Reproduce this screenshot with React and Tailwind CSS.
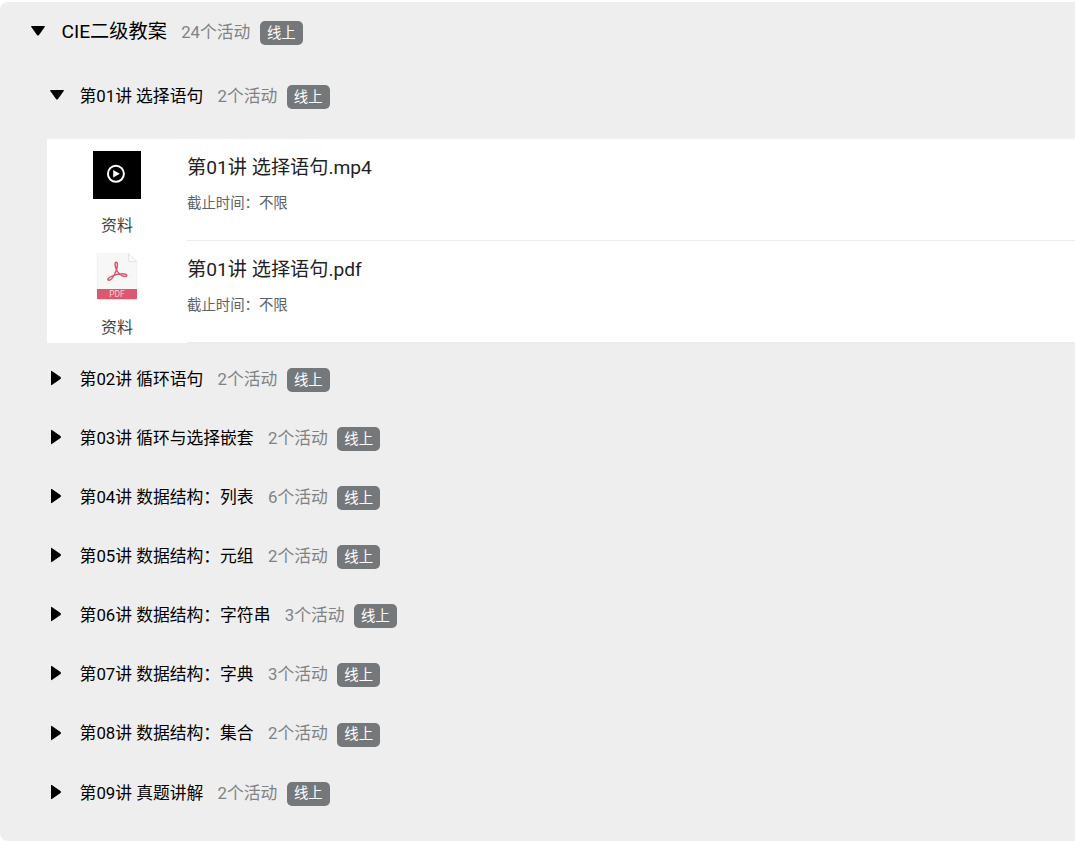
import React from "react";

const lessons = [
  { title: "第02讲 循环语句", count: 2 },
  { title: "第03讲 循环与选择嵌套", count: 2 },
  { title: "第04讲 数据结构：列表", count: 6 },
  { title: "第05讲 数据结构：元组", count: 2 },
  { title: "第06讲 数据结构：字符串", count: 3 },
  { title: "第07讲 数据结构：字典", count: 3 },
  { title: "第08讲 数据结构：集合", count: 2 },
  { title: "第09讲 真题讲解", count: 2 },
];

const Caret = ({ open }) =>
  open ? (
    <svg className="w-4 h-3 mb-[2px] shrink-0" viewBox="0 0 16 12">
      <path d="M1.8 1h12.4q1.3 0 .5 1.1L9 9.9q-1 1.2-2 0L1.3 2.1Q.5 1 1.8 1Z" />
    </svg>
  ) : (
    <svg className="w-3 h-4 mb-px shrink-0" viewBox="0 0 12 16">
      <path d="M1 1.8Q1 .3 2.2 1.2l8.3 5.7q1.2 1.1 0 2.2l-8.3 5.7Q1 15.7 1 14.2Z" />
    </svg>
  );

const Meta = ({ count }) => (
  <>
    <span className="ml-[14.3px] pt-[2px] text-[16.8px] text-[#808385]">{count}个活动</span>
    <span className="ml-[9.4px] mt-[3px] flex h-6 w-[43px] items-center justify-center rounded-[5px] bg-[#75787b] pt-px text-[14.4px] text-white">
      线上
    </span>
  </>
);

const VideoIcon = () => (
  <svg className="w-12 h-12" viewBox="0 0 48 48">
    <rect width="48" height="48" />
    <circle cx="22.9" cy="22.8" r="8" fill="none" stroke="#fff" strokeWidth="2" />
    <path d="M20.2 19v7.6l6.6-3.8Z" fill="#fff" />
  </svg>
);

const PdfIcon = () => (
  <svg className="w-12 h-12" viewBox="0 0 48 48">
    <path d="M4.3.5h31.2l8.2 8.2V37H4.3Z" fill="#f7f7f7" stroke="#efefef" strokeWidth=".7" />
    <path d="M35.5.5v6.7q0 1.5 1.5 1.5h6.7Z" fill="#fafafa" stroke="#dedede" strokeWidth=".7" />
    <path d="M4 36h40v9.3q0 1-1 1H5q-1 0-1-1Z" fill="#dc5870" />
    <path
      d="M23.3 16.5c-1.5-3.8-1.7-7.2-.1-7.2 1.9 0 1.4 4.6-.1 8.5-1.5 3.9-4.5 9.1-6.9 9.5-2.2.3-2.3-2.1 2.8-4.2 4.6-1.8 9.5-2.6 12.3-2.1 3.4.6 3.2 2.5.9 2.4-3.2-.1-7.3-3.2-8.9-6.9Z"
      fill="none"
      stroke="#dc5870"
      strokeWidth="1.5"
    />
    <text x="24" y="43.8" textAnchor="middle" fontSize="8.4" fill="#f7cfd6">
      PDF
    </text>
  </svg>
);

const FileRow = ({ icon, name }) => (
  <div className="flex h-[102px]">
    <div className="flex w-[140px] flex-col items-center pt-3 text-[#414446]">
      {icon}
      <span className="mt-[15px] text-[16px] leading-6">资料</span>
    </div>
    <div className="flex-1 border-b border-[#ebebeb] pt-[15px]">
      <div className="text-[19.2px] leading-7 text-[#1f2224]">{name}</div>
      <div className="mt-3 text-[14.4px] leading-5 text-[#606366]">截止时间：不限</div>
    </div>
  </div>
);

export default function App() {
  return (
    <div className="h-[841px] overflow-hidden bg-white pt-[2px] font-['Roboto','Noto_Sans_CJK_SC',sans-serif]">
      <div className="h-[839px] rounded-l-lg bg-[#eeeeee] text-black">
        <div className="flex h-[59px] items-center pl-[29.5px]">
          <Caret open />
          <span className="ml-4 pt-[2px] text-[19.2px]">CIE二级教案</span>
          <Meta count={24} />
        </div>

        <div className="mb-[9px] flex h-[69px] items-center pl-[48.5px]">
          <Caret open />
          <span className="ml-[15px] pt-[2px] text-[16.8px]">第01讲 选择语句</span>
          <Meta count={2} />
        </div>

        {/* files of the opened lesson */}
        <div className="ml-[47px] bg-white">
          <FileRow icon={<VideoIcon />} name="第01讲 选择语句.mp4" />
          <FileRow icon={<PdfIcon />} name="第01讲 选择语句.pdf" />
        </div>

        <div className="pt-[5.75px]">
          {lessons.map((lesson) => (
            <div key={lesson.title} className="flex h-[59.14px] items-center pl-[50px]">
              <Caret />
              <span className="ml-[17.6px] pt-[2px] text-[16.8px]">{lesson.title}</span>
              <Meta count={lesson.count} />
            </div>
          ))}
        </div>
      </div>
    </div>
  );
}
